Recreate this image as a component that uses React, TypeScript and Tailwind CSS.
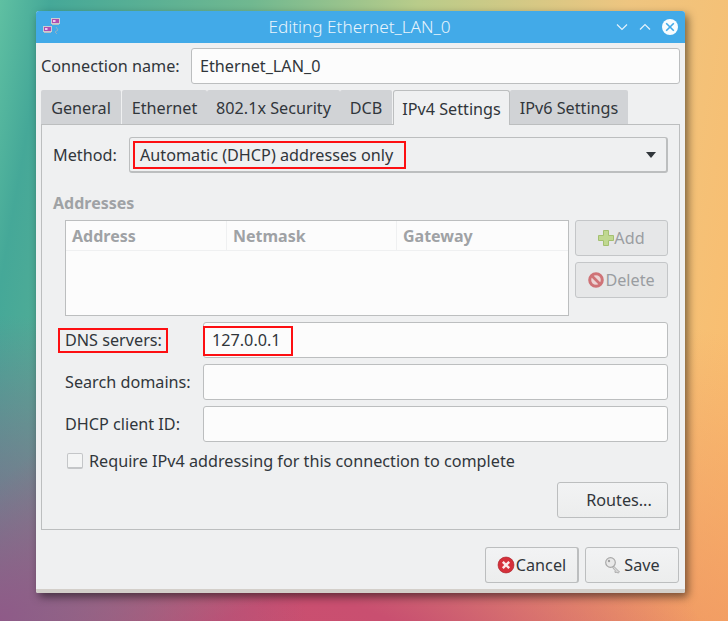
import React from "react";

const font = "font-['Noto_Sans',sans-serif]";

function NetIcon() {
  return (
    <svg width="22" height="22" viewBox="0 0 22 22">
      <path d="M15 11l2 3-3 2 2 2" fill="none" stroke="#8fb0c8" strokeWidth="1" />
      <rect x="10.5" y="2.5" width="8" height="5" fill="#b04db0" stroke="#c9cdd2" />
      <rect x="12" y="4" width="2.5" height="2" fill="#f0c8f0" />
      <rect x="11" y="8" width="7" height="1" fill="#b9bec4" />
      <rect x="2.5" y="10.5" width="8" height="5" fill="#b04db0" stroke="#c9cdd2" />
      <rect x="4" y="12" width="2.5" height="2" fill="#f0c8f0" />
      <rect x="3" y="16" width="7" height="1" fill="#b9bec4" />
    </svg>
  );
}

function Tab({ label, w, active }: { label: string; w: string; active?: boolean }) {
  return (
    <div
      className={
        active
          ? `${w} h-[35px] mb-[-1px] pt-[1px] z-10 flex items-center justify-center rounded-t-[3px] border border-b-0 border-[#bcbebf] bg-[#eff0f1]`
          : `${w} h-[34px] pt-[1px] flex items-center justify-center rounded-t-[2px] bg-[#d1d3d6]`
      }
    >
      {label}
    </div>
  );
}

function Field({ children, className }: { children?: React.ReactNode; className?: string }) {
  return (
    <div className={`h-[36px] flex items-center rounded-[3px] border border-[#bcbebf] bg-[#fcfcfc] ${className ?? ""}`}>
      {children}
    </div>
  );
}

function Btn({ children, className }: { children: React.ReactNode; className?: string }) {
  return (
    <div className={`h-[36px] flex items-center justify-center rounded-[3px] border border-[#bcbebf] bg-gradient-to-b from-[#f2f3f4] to-[#eceded] ${className ?? ""}`}>
      {children}
    </div>
  );
}

function RedBox({ className }: { className: string }) {
  return <div className={`absolute border-2 border-[#fd0f12] ${className}`} />;
}

export default function App() {
  return (
    <div
      className={`${font} relative w-[728px] h-[621px] overflow-hidden pl-[36px] pt-[11px] text-[16.2px] leading-[22px] text-[#31363b] bg-[radial-gradient(circle_at_0%_100%,#8f5a88_0%,transparent_32%),radial-gradient(circle_at_42%_125%,#d04c6e_0%,#c94f70_20%,transparent_48%),radial-gradient(circle_at_88%_118%,#ee8f5f_0%,transparent_42%),linear-gradient(100deg,#5fc0a2_0%,#45a898_6%,#70b890_30%,#b9cc8a_50%,#eec580_75%,#fcbc6c_100%)]`}
    >
      <div className="w-[649px] h-[582px] flex flex-col rounded-t-[3px] rounded-b-[2px] overflow-hidden bg-[#eff0f1] shadow-[3px_4px_9px_rgba(0,0,0,0.5)]">
        {/* Title bar */}
        <div className="relative h-[32px] shrink-0 flex items-center justify-center bg-[#42aae8] text-[#e8f4fc] pr-[2px]">
          <div className="absolute left-[5px] top-[5px]">
            <NetIcon />
          </div>
          <span className="font-light text-[17.2px]">Editing Ethernet_LAN_0</span>
          <div className="absolute right-[6px] top-[7px] flex items-center">
            <svg width="12" height="8" viewBox="0 0 12 8" className="mr-[11px]">
              <path d="M1 1.5l5 5 5-5" fill="none" stroke="#e3f2fc" strokeWidth="1.2" />
            </svg>
            <svg width="12" height="8" viewBox="0 0 12 8" className="mr-[10px]">
              <path d="M1 6.5l5-5 5 5" fill="none" stroke="#e3f2fc" strokeWidth="1.2" />
            </svg>
            <svg width="18" height="18" viewBox="0 0 18 18">
              <circle cx="9" cy="9" r="8" fill="#f8fcfe" />
              <path d="M5.2 5.2l7.6 7.6M12.8 5.2l-7.6 7.6" stroke="#42aae8" strokeWidth="1.6" />
            </svg>
          </div>
        </div>

        {/* Body */}
        <div className="flex-1 flex flex-col pl-[5px] pr-[5px] pt-[5px]">
          <div className="flex items-center h-[35px]">
            <span className="w-[150px] shrink-0">Connection name:</span>
            <Field className="flex-1 h-[35px] pl-[8px]">Ethernet_LAN_0</Field>
          </div>

          <div className="flex mt-[7px] pl-0">
            <Tab label="General" w="w-[80px]" />
            <div className="w-[1px]" />
            <Tab label="Ethernet" w="w-[85px]" />
            <Tab label="802.1x Security" w="w-[133px]" />
            <Tab label="DCB" w="w-[52px]" />
            <div className="w-[1px]" />
            <Tab label="IPv4 Settings" w="w-[117px]" active />
            <Tab label="IPv6 Settings" w="w-[118px]" />
          </div>

          {/* Pane */}
          <div className="h-[406px] border border-[#bcbebf] pt-[12px] pl-[11px] pr-[11px] flex flex-col">
            <div className="relative flex items-center h-[36px]">
              <span className="w-[76px] shrink-0">Method:</span>
              <div className="flex-1 h-[36px] flex items-center justify-between pl-[10px] pr-[10px] rounded-[3px] border border-[#bcbebf] border-b-2 border-r-2 bg-[#eff0f1]">
                <span>Automatic (DHCP) addresses only</span>
                <svg width="10" height="6" viewBox="0 0 10 6">
                  <path d="M0 0h10L5 6z" fill="#31363b" />
                </svg>
              </div>
              <RedBox className="left-[80px] top-[4px] w-[273px] h-[28px]" />
            </div>

            <div className="mt-[19px] h-[22px] font-bold text-[16px] text-[#9fa2a5]">Addresses</div>

            <div className="flex mt-[6px] pl-[12px]">
              <div className="w-[504px] h-[96px] border border-[#bcbebf] bg-[#fcfcfc]">
                <div className="flex h-[30px] items-center border-b border-[#eff0f1] font-bold text-[#9fa2a5] text-[16px]">
                  <div className="w-[161px] h-full flex items-center pl-[6px] border-r border-[#eff0f1]">Address</div>
                  <div className="w-[170px] h-full flex items-center pl-[6px] border-r border-[#eff0f1]">Netmask</div>
                  <div className="flex-1 h-full flex items-center pl-[6px]">Gateway</div>
                </div>
              </div>
              <div className="ml-[6px] w-[93px] flex flex-col gap-[6px] text-[#9a9da1]">
                <div className="h-[36px] flex items-center justify-center rounded-[3px] border border-[#c4c6c8] bg-[#e6e7e8]">
                  <svg width="16" height="16" viewBox="0 0 16 16">
                    <path d="M5.5 .5h5v5h5v5h-5v5h-5v-5h-5v-5h5z" fill="#c0d890" stroke="#a4c070" />
                  </svg>
                  <span>Add</span>
                </div>
                <div className="h-[36px] flex items-center justify-center rounded-[3px] border border-[#c4c6c8] bg-[#e6e7e8]">
                  <svg width="16" height="16" viewBox="0 0 16 16" className="mr-[1px]">
                    <circle cx="8" cy="8" r="6.3" fill="#ecd4d4" stroke="#cf7377" strokeWidth="3" />
                    <path d="M3.5 3.5l9 9" stroke="#cf7377" strokeWidth="2.6" />
                  </svg>
                  <span>Delete</span>
                </div>
              </div>
            </div>

            <div className="relative flex items-center mt-[6px] pl-[12px]">
              <span className="w-[138px] shrink-0">DNS servers:</span>
              <Field className="flex-1 pl-[8px]">127.0.0.1</Field>
              <RedBox className="left-[5px] top-[6px] w-[110px] h-[25px]" />
              <RedBox className="left-[150px] top-[4px] w-[90px] h-[30px]" />
            </div>
            <div className="flex items-center mt-[6px] pl-[12px]">
              <span className="w-[138px] shrink-0">Search domains:</span>
              <Field className="flex-1" />
            </div>
            <div className="flex items-center mt-[6px] pl-[12px]">
              <span className="w-[138px] shrink-0">DHCP client ID:</span>
              <Field className="flex-1" />
            </div>

            <div className="flex items-center mt-[8px] pl-[14px] h-[22px]">
              <div className="w-[16px] h-[16px] rounded-[2px] border border-[#c4c6c8] border-b-2 bg-[#f4f5f5]" />
              <span className="ml-[6px]">Require IPv4 addressing for this connection to complete</span>
            </div>

            <div className="flex justify-end mt-[10px]">
              <Btn className="w-[111px] pl-[13px]">Routes...</Btn>
            </div>
          </div>

          {/* Bottom buttons */}
          <div className="flex justify-end gap-[6px] mt-[17px] pr-[1px]">
            <Btn className="w-[94px] border-r-2">
              <svg width="18" height="18" viewBox="0 0 18 18">
                <circle cx="9" cy="9" r="8" fill="#d5303a" stroke="#a82028" strokeWidth="0.6" />
                <path d="M5.8 5.8l6.4 6.4M12.2 5.8l-6.4 6.4" stroke="#fbeaea" strokeWidth="2.4" />
              </svg>
              <span className="ml-[1px]">Cancel</span>
            </Btn>
            <Btn className="w-[94px]">
              <svg width="18" height="18" viewBox="0 0 18 18">
                <circle cx="6.5" cy="6.5" r="4.8" fill="#e8e8e8" stroke="#a8a8a8" strokeWidth="1.2" />
                <circle cx="5" cy="5" r="1.2" fill="#a0a0a0" />
                <path d="M9.5 10l6 6-1.5 1.2-1.2-1.2-1 1-1-1 .5-1.2-2.5-3z" fill="#d8d8d8" stroke="#a0a0a0" strokeWidth="0.8" />
              </svg>
              <span className="ml-[2px]">Save</span>
            </Btn>
          </div>
        </div>

        <div className="h-[4px] shrink-0 bg-[#d3cfca]" />
      </div>
    </div>
  );
}
